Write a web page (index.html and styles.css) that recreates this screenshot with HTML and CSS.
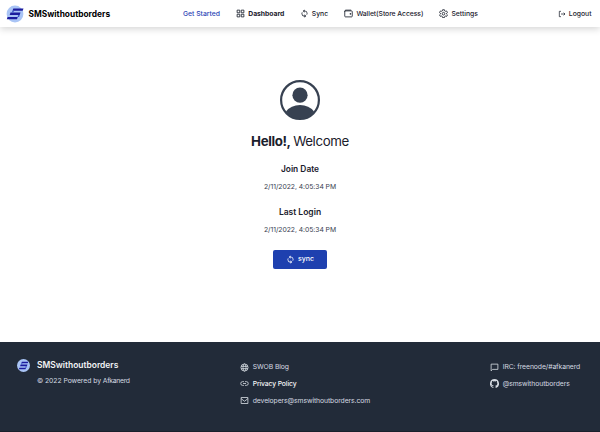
FILE: index.html
```html
<!DOCTYPE html>
<html lang="en">
<head>
<meta charset="utf-8">
<title>SMSwithoutborders</title>
<link rel="stylesheet" href="styles.css">
</head>
<body>
<svg class="defs" aria-hidden="true">
  <symbol id="logo" viewBox="0 0 18 18">
    <circle cx="9" cy="9" r="8.4" fill="#a9c4f5"/>
    <path fill="#1c1c9e" d="M7.300 3.400h10.200l-.8 2.300H6.500zM4.500 7.500h10l-.8 2.500H3.700zM1.600 11.900h10.200l-.8 2.300H.8z"/>
    <path fill="#3b55c8" d="M6.500 5.700h1.500l-.6 1.800H5.800zM12.200 10h1.500l-.6 1.900h-1.500z"/>
  </symbol>
  <symbol id="logo-small" viewBox="0 0 18 18">
    <circle cx="9" cy="9" r="9" fill="#a9c4f5"/>
    <path fill="#1c1c9e" d="M6.700 3.700h8.800l-.6 2.300H6zM5 7.500h9.500l-.8 2.700H4.300zM3.300 12h9.200l-.7 2.300H2.600z"/>
    <path fill="#3b55c8" d="M6 6h1.600l-.5 1.500H5.500zM11.800 10.200h1.900l-.6 1.800h-1.800z"/>
  </symbol>
  <symbol id="sync" viewBox="0 0 24 24">
    <path fill="currentColor" d="M12 4V1L7.5 5.500 12 10V6a6 6 0 0 1 5.300 8.800l1.400 1.500A8 8 0 0 0 12 4zm0 14a6 6 0 0 1-5.300-8.800L5.300 7.700A8 8 0 0 0 12 20v3l4.500-4.500L12 14z"/>
  </symbol>
</svg>
<header class="navbar">
  <a class="brand"><svg class="brand-logo"><use href="#logo"/></svg><span>SMSwithoutborders</span></a>
  <nav class="menu">
    <a class="start">Get Started</a>
    <a class="active"><svg class="icon line" viewBox="0 0 24 24"><path d="M3 3h7v7H3zM14 3h7v7h-7zM3 14h7v7H3zM14 14h7v7h-7z"/></svg><span>Dashboard</span></a>
    <a class="sync-link"><svg class="icon"><use href="#sync"/></svg><span>Sync</span></a>
    <a class="wallet"><svg class="icon line" viewBox="0 0 24 24"><rect x="2" y="5" width="20" height="16" rx="2"/><path d="M2 8V6q0-3 3-3h14M16 12h2v2h-2z"/></svg><span>Wallet(Store Access)</span></a>
    <a class="settings"><svg class="icon line" viewBox="0 0 24 24"><path d="M9.500 2h5l.7 3.100 2 1.100 3-1 2.300 4.200-2.300 2.100v2l2.300 2.100-2.300 4.200-3-1-2 1.100-.7 3.100h-5l-.7-3.100-2-1.100-3 1-2.300-4.200 2.300-2.100v-2L1.500 9.400l2.300-4.200 3 1 2-1.100z"/><circle cx="12" cy="12.500" r="3.500"/></svg><span>Settings</span></a>
  </nav>
  <a class="logout"><svg class="icon line" viewBox="0 0 24 24"><path d="M9 4H4v16h5M9 12h12M17 8l4 4-4 4"/></svg><span>Logout</span></a>
</header>
<main class="profile">
  <svg class="avatar" viewBox="0 0 40 40"><circle cx="20" cy="20" r="18.900"/><path d="M6 31.500Q11 25 20 25t14 6.500Q28.500 39 20 39T6 31.500z"/><circle class="head" cx="20" cy="15.200" r="7.600"/></svg>
  <h1><b>Hello!,</b> <span>Welcome</span></h1>
  <h2>Join Date</h2>
  <p>2/11/2022, 4:05:34 PM</p>
  <h2 class="login">Last Login</h2>
  <p>2/11/2022, 4:05:34 PM</p>
  <button><svg class="icon"><use href="#sync"/></svg><span>sync</span></button>
</main>
<footer class="footer">
  <section class="about">
    <svg class="foot-logo"><use href="#logo-small"/></svg>
    <div><h3>SMSwithoutborders</h3><p>© 2022 Powered by <span>Afkanerd</span></p></div>
  </section>
  <ul class="links">
    <li><svg class="icon line" viewBox="0 0 24 24"><circle cx="12" cy="12" r="9.500"/><ellipse cx="12" cy="12" rx="4" ry="9.500"/><path d="M3 9h18M3 15h18"/></svg><span class="blog">SWOB Blog</span></li>
    <li><svg class="icon line" viewBox="0 0 24 24"><path d="M10.500 7H7a5 5 0 0 0 0 10h3.500M13.500 7H17a5 5 0 0 1 0 10h-3.500M8 12h8"/></svg><span class="privacy">Privacy Policy</span></li>
    <li><svg class="icon line" viewBox="0 0 24 24"><path d="M3 4h18v16H3zM3 7l9 7 9-7"/></svg><span class="mail">developers@smswithoutborders.com</span></li>
  </ul>
  <ul class="social">
    <li><svg class="icon line" viewBox="0 0 24 24"><path d="M3 3h18v14H7l-4 4z"/></svg><span class="irc">IRC: freenode/#afkanerd</span></li>
    <li><svg class="icon" viewBox="0 0 24 24"><path fill="currentColor" d="M12 .3a12 12 0 0 0-3.800 23.400c.6.100.8-.3.800-.6v-2c-3.300.7-4-1.600-4-1.600-.6-1.400-1.400-1.800-1.400-1.800-1-.7.100-.7.100-.7 1.200 0 1.900 1.200 1.900 1.200 1 1.800 2.800 1.300 3.500 1 0-.8.400-1.300.7-1.600-2.700-.3-5.500-1.300-5.500-6 0-1.200.5-2.300 1.300-3.100-.2-.4-.6-1.600 0-3.200 0 0 1-.3 3.400 1.200a11.500 11.500 0 0 1 6 0c2.300-1.500 3.300-1.200 3.300-1.200.6 1.600.2 2.800 0 3.200.9.800 1.300 1.900 1.300 3.200 0 4.600-2.800 5.600-5.500 5.900.5.400.9 1 .9 2.200v3.300c0 .3.100.7.800.6A12 12 0 0 0 12 .3"/></svg><span class="handle">@smswithoutborders</span></li>
  </ul>
</footer>
</body>
</html>
```
FILE: styles.css
```css
* { box-sizing: border-box; }
body { margin: 0; height: 432px; display: flex; flex-direction: column; font: 500 6.8px/10px Inter, "Liberation Sans", sans-serif; color: #1a202c; background: #fff; overflow: hidden; }
h1, h2, h3, p, ul { margin: 0; padding: 0; }
ul { list-style: none; }
.defs { position: absolute; width: 0; height: 0; }
.icon { width: 9px; height: 9px; flex: none; }
.line { fill: none; stroke: currentColor; stroke-width: 2.2; }
.navbar { height: 27px; flex: none; display: flex; align-items: center; padding: 0 8.5px 0 6px; box-shadow: 0 2px 7px rgba(0, 0, 0, .17); }
.navbar a { display: flex; align-items: center; white-space: nowrap; }
.navbar .brand { width: 177px; gap: 4.5px; font-size: 8.35px; font-weight: 700; color: #000; }
.brand-logo { width: 18px; height: 18px; }
.menu { display: flex; gap: 16.3px; }
.navbar .menu a { gap: 3px; }
.menu .start { color: #2a43b5; }
.menu .active { font-weight: 700; letter-spacing: -.03px; }
.menu .sync-link { margin-left: -.8px; }
.wallet { letter-spacing: -.05px; }
.menu .settings { margin-left: -.3px; }
.logout { margin-left: auto; gap: 3px; }
.logout .icon { width: 8px; height: 8px; }
.profile { flex: none; height: 315px; padding-top: 53px; display: flex; flex-direction: column; align-items: center; }
.avatar { width: 40px; height: 40px; fill: none; stroke: #374151; stroke-width: 2.2; }
.avatar path, .avatar .head { fill: #374151; stroke: none; }
h1 { margin-top: 13px; font-size: 13.3px; line-height: 16px; font-weight: 400; letter-spacing: -.37px; word-spacing: -.9px; white-space: nowrap; }
h1 b { font-weight: 700; }
h2 { margin-top: 13.5px; font-size: 8.4px; line-height: 12px; font-weight: 600; }
h2.login { margin-top: 14.5px; font-size: 8.5px; }
.profile p { margin-top: 7px; font-weight: 400; letter-spacing: -.04px; color: #374151; }
.profile .login + p { margin-top: 6.5px; }
button { margin-top: 15.5px; width: 54px; height: 18.5px; padding: 0; display: flex; align-items: center; justify-content: center; gap: 3px; border: 0; border-radius: 2px; background: #1e40af; color: #fff; font: inherit; font-size: 7px; }
.footer { flex: 1; display: grid; grid-template-columns: 223px 250px 1fr; padding: 17px 0 0 17px; background: #222b39; color: #d5dae1; font-weight: 400; white-space: nowrap; border-bottom: 1px solid #1a202c; }
.about { display: flex; gap: 7px; }
.foot-logo { width: 13px; height: 13px; }
h3 { font-size: 8.45px; line-height: 13px; font-weight: 600; color: #f3f4f6; }
.about p { margin-top: 3.5px; letter-spacing: -.05px; }
.about p span { letter-spacing: -.3px; }
.links, .social { display: flex; flex-direction: column; gap: 6.7px; padding-top: 3.3px; }
li { display: flex; align-items: center; gap: 3.7px; letter-spacing: -.08px; }
.privacy { font-weight: 500; color: #f3f4f6; letter-spacing: -.13px; }
```
